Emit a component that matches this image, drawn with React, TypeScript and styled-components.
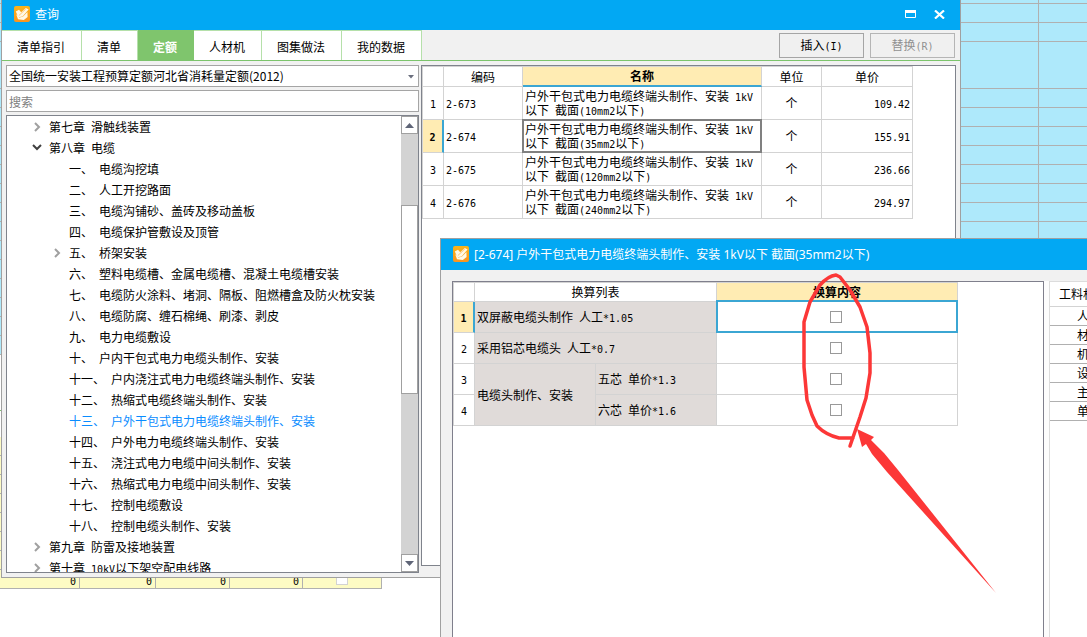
import React from "react";
import styled, { createGlobalStyle, css } from "styled-components";

const GlobalStyle = createGlobalStyle`
  *, *::before, *::after { box-sizing: border-box; }
  body {
    margin: 0;
    background: #fff;
    color: #000;
    font: 12px/14px "Noto Sans CJK SC", sans-serif;
  }
  button, input, select { font: inherit; color: inherit; margin: 0; }
  ul { list-style: none; margin: 0; padding: 0; }
`;

const BLUE = "#02a8f3";
const LINE = "#d3d3d3";
const ACCENT = "#3ba6d3";
const SELECTED = "#ffecb3";
const RED = "#fc3737";

/* ---------- text with half-width Latin runs ---------- */

const Latin = styled.span`
  font-family: "DejaVu Sans Mono", monospace;
  font-size: 10px;
  line-height: 1px;
`;

function Mixed({ children }: { children: string }) {
  const runs = children.split(/([\x20-\x7e]+)/).filter(Boolean);
  return (
    <span>
      {runs.map((run, i) =>
        /^[\x20-\x7e]/.test(run) ? <Latin key={i}>{run}</Latin> : run
      )}
    </span>
  );
}

/* ---------- desktop and the sheet behind the windows ---------- */

const Desktop = styled.main`
  position: relative;
  min-height: 100vh;
  overflow: hidden;
  background: #fff;
`;

const BlueSheet = styled.table`
  width: 100%;
  table-layout: fixed;
  border-collapse: separate;
  border-spacing: 0;
  background: #aee9fb;
  td {
    padding: 0;
    border-bottom: 1px solid #b0b0b0;
  }
  td:first-child { border-right: 1px solid #b0b0b0; }
`;

const SheetRow = styled.tr<{ $height: number }>`
  height: ${(p) => p.$height}px;
`;

const SheetGap = styled.div`
  height: 56px;
  margin-bottom: 26px;
  border-bottom: 1px solid #7cc46c;
`;

const YellowSheet = styled.table`
  width: 382px;
  table-layout: fixed;
  border-collapse: separate;
  border-spacing: 0;
  background: #fdfbc4;
  td {
    height: 19px;
    padding: 2px 3px 0;
    border-right: 1px solid #b0b0b0;
    border-bottom: 1px solid #b0b0b0;
    text-align: right;
    line-height: 14px;
  }
  td:last-child { padding-top: 0; }
`;

/* ---------- window chrome ---------- */

const windowFrame = css`
  position: absolute;
  display: flex;
  flex-direction: column;
  background: #f1f1f1;
`;

const QueryWindow = styled.section`
  ${windowFrame}
  top: 0;
  left: 1px;
  right: 126px;
  height: 578px;
  border: 1px solid #a0a0a0;
  border-top: 0;
`;

const DialogWindow = styled.section`
  ${windowFrame}
  top: 238px;
  left: 440px;
  right: 0;
  bottom: 0;
  border-top: 1px solid #a0a0a0;
  border-left: 1px solid #a0a0a0;
`;

const TitleBar = styled.header<{ $height: number }>`
  flex: none;
  display: flex;
  align-items: center;
  gap: 5px;
  height: ${(p) => p.$height}px;
  padding: 0 15px 2px 12px;
  background: ${BLUE};
  color: #fff;
`;

const Title = styled.h1`
  flex: 1;
  margin: 0;
  padding-top: 2px;
  font: 400 12px/16px "Noto Sans", "Noto Sans CJK SC", sans-serif;
  white-space: nowrap;
`;

const ChromeButton = styled.button`
  display: flex;
  padding: 0;
  margin-left: 13px;
  border: 0;
  background: none;
`;

function AppIcon() {
  return (
    <svg width="16" height="16" viewBox="0 0 16 16" aria-hidden="true">
      <defs>
        <linearGradient id="appOrange" x1="0" y1="0" x2="0" y2="1">
          <stop offset="0" stopColor="#f9b418" />
          <stop offset="1" stopColor="#fb9420" />
        </linearGradient>
      </defs>
      <rect width="16" height="16" rx="2" fill="url(#appOrange)" />
      <path d="M1.800 5.500 5 3.800l2.200 2.400 4.600-4.200 2.800 1.500-6 6.900-4.200.8z" fill="#fff8e6" />
      <path d="m2.200 8.200 2 1.600 1 1.600 3.600-.6 4.600-4.800.2 5-3.800 3-5.800-.8z" fill="#fff8e6" />
      <path d="m4.800 9.600 7-6.600" stroke="#fbb04a" strokeWidth="0.700" />
    </svg>
  );
}

/* ---------- query window ---------- */

const Toolbar = styled.div`
  flex: none;
  display: flex;
  height: 31px;
  padding-right: 5px;
  border-bottom: 1px solid #7cc46c;
`;

const Tabs = styled.nav`
  flex: 1;
  display: flex;
`;

const Tab = styled.button<{ $active?: boolean }>`
  padding: 2px 16px 0 15px;
  border: 0;
  border-top: 1px solid #b5e0aa;
  border-right: 1px solid #b5e0aa;
  background: #fff;
  white-space: nowrap;
  ${(p) =>
    p.$active &&
    css`
      border-color: #7fc56d;
      background: #7fc56d;
      color: #fff;
      font-weight: 700;
    `}
`;

const Actions = styled.div`
  display: flex;
  align-items: center;
  gap: 6px;
`;

const ActionButton = styled.button`
  width: 85px;
  height: 25px;
  padding: 0;
  border: 1px solid #a5a5a5;
  background: #f0f0f0;
  &:disabled {
    border-color: #b5b5b5;
    color: #909090;
  }
`;

const QueryBody = styled.div`
  flex: 1;
  min-height: 0;
  display: flex;
  gap: 2px;
  padding: 4px;
`;

const Sidebar = styled.div`
  flex: 0 0 413px;
  min-height: 0;
  display: flex;
  flex-direction: column;
  gap: 3px;
`;

const ComboBox = styled.label`
  flex: none;
  position: relative;
  display: block;
  select {
    display: block;
    appearance: none;
    width: 100%;
    height: 22px;
    padding: 0 20px 0 2px;
    border: 1px solid #a5a5a5;
    border-radius: 0;
    background: #fff;
  }
  svg {
    position: absolute;
    top: 10px;
    right: 5px;
  }
`;

const SearchBox = styled.input`
  flex: none;
  height: 22px;
  padding: 0 2px;
  border: 1px solid #a5a5a5;
  border-radius: 0;
  background: #fff;
  &::placeholder { color: #808080; opacity: 1; }
`;

const TreePanel = styled.div`
  flex: 1;
  min-height: 0;
  display: flex;
  border: 1px solid #7f838c;
  background: #fff;
`;

const TreeList = styled.ul`
  flex: 1;
  padding-top: 1px;
  overflow: hidden;
`;

const TreeRow = styled.li<{ $level: number; $current?: boolean }>`
  display: flex;
  align-items: center;
  height: 21px;
  padding-bottom: 2px;
  padding-left: ${(p) => (p.$level === 1 ? 22 : 42)}px;
  color: ${(p) => (p.$current ? "#0a8cff" : "#000")};
  white-space: nowrap;
`;

const Toggle = styled.button`
  flex: 0 0 20px;
  display: flex;
  justify-content: center;
  padding: 0 5px 0 0;
  border: 0;
  background: none;
`;

const ScrollBar = styled.div`
  flex: 0 0 17px;
  display: flex;
  flex-direction: column;
  background: #d3d3d3;
`;

const ScrollButton = styled.button`
  flex: 0 0 18px;
  display: flex;
  align-items: center;
  justify-content: center;
  padding: 0;
  border: 1px solid #a0a0a0;
  background: #fff;
`;

const ScrollSpace = styled.div<{ $grow: number }>`
  flex: ${(p) => p.$grow} 1 0;
`;

const ScrollThumb = styled(ScrollSpace)`
  border: 1px solid #a0a0a0;
  background: #fff;
`;

const ResultPanel = styled.div`
  flex: 1;
  min-width: 0;
  margin-bottom: 7px;
  border: 1px solid #7f838c;
  background: #fff;
`;

/* ---------- data grids ---------- */

const Grid = styled.table`
  table-layout: fixed;
  border-collapse: separate;
  border-spacing: 0;
  width: min-content;
`;

const HeadCell = styled.th<{ $selected?: boolean; $underline?: boolean; $height: number }>`
  height: ${(p) => p.$height}px;
  padding: 0;
  border: 1px solid ${LINE};
  border-left-width: 0;
  font-weight: ${(p) => (p.$selected ? 700 : 400)};
  background: ${(p) => (p.$selected ? SELECTED : "#fff")};
  ${(p) => p.$underline && css`border-bottom: 2px solid ${ACCENT};`}
  &:first-child { border-left-width: 1px; }
`;

const RowHead = styled.th<{ $selected?: boolean }>`
  padding: 0;
  border: 1px solid ${LINE};
  border-top: 0;
  font-weight: ${(p) => (p.$selected ? 700 : 400)};
  ${(p) =>
    p.$selected &&
    css`
      background: ${SELECTED};
      border-right: 2px solid ${ACCENT};
    `}
`;

const Cell = styled.td<{ $height: number; $align?: string; $shade?: boolean; $frame?: string; $lift?: number }>`
  height: ${(p) => p.$height}px;
  padding: 0 2px;
  border-right: 1px solid ${LINE};
  border-bottom: 1px solid ${LINE};
  text-align: ${(p) => p.$align ?? "left"};
  background: ${(p) => (p.$shade ? "#e0dbd9" : "#fff")};
  ${(p) =>
    p.$frame &&
    css`
      position: relative;
      &::after {
        content: "";
        position: absolute;
        inset: -${p.$lift ?? 1}px -1px -1px;
        border: 2px solid ${p.$frame};
        pointer-events: none;
      }
    `}
`;

const CheckBox = styled.input.attrs({ type: "checkbox" })<{ $faint?: boolean }>`
  appearance: none;
  display: block;
  width: 12px;
  height: 12px;
  margin: 0 auto;
  border: 1px solid ${(p) => (p.$faint ? LINE : "#999")};
  background: #fff;
`;

/* ---------- conversion dialog ---------- */

const DialogBody = styled.div`
  flex: 1;
  min-height: 0;
  display: flex;
  padding: 11px 0 0 11px;
`;

const ConvertPanel = styled.div`
  flex: 1;
  min-width: 0;
  border: 1px solid #7f7f8c;
  border-bottom: 0;
  background: #fff;
`;

const CheckTd = styled(Cell)`
  padding: 0 4px 0 2px;
`;

const Splitter = styled.div`
  flex: 0 0 5px;
  background: #fdfdfd;
`;

const FactorPanel = styled.div`
  flex: 0 0 38px;
  overflow: hidden;
  border-top: 1px solid #dcdcdc;
  border-left: 1px solid #dcdcdc;
  background: #fff;
`;

const FactorTable = styled.table`
  width: 100%;
  table-layout: fixed;
  border-collapse: separate;
  border-spacing: 0;
  white-space: nowrap;
  th, td {
    height: 19px;
    padding: 0 0 0 27px;
    border-bottom: 1px solid #b0b0b0;
    text-align: left;
    font-weight: 400;
    overflow: hidden;
  }
  th {
    height: 25px;
    padding-left: 9px;
    border-color: ${LINE};
  }
`;

const Markup = styled.svg`
  position: absolute;
  top: 272px;
  left: 800px;
  pointer-events: none;
`;

/* ---------- data ---------- */

type Node = { text: string; level: number; state?: "open" | "closed"; current?: boolean };

const tree: Node[] = [
  { text: "第七章 滑触线装置", level: 1, state: "closed" },
  { text: "第八章 电缆", level: 1, state: "open" },
  { text: "一、 电缆沟挖填", level: 2 },
  { text: "二、 人工开挖路面", level: 2 },
  { text: "三、 电缆沟铺砂、盖砖及移动盖板", level: 2 },
  { text: "四、 电缆保护管敷设及顶管", level: 2 },
  { text: "五、 桥架安装", level: 2, state: "closed" },
  { text: "六、 塑料电缆槽、金属电缆槽、混凝土电缆槽安装", level: 2 },
  { text: "七、 电缆防火涂料、堵洞、隔板、阻燃槽盒及防火枕安装", level: 2 },
  { text: "八、 电缆防腐、缠石棉绳、刷漆、剥皮", level: 2 },
  { text: "九、 电力电缆敷设", level: 2 },
  { text: "十、 户内干包式电力电缆头制作、安装", level: 2 },
  { text: "十一、 户内浇注式电力电缆终端头制作、安装", level: 2 },
  { text: "十二、 热缩式电缆终端头制作、安装", level: 2 },
  { text: "十三、 户外干包式电力电缆终端头制作、安装", level: 2, current: true },
  { text: "十四、 户外电力电缆终端头制作、安装", level: 2 },
  { text: "十五、 浇注式电力电缆中间头制作、安装", level: 2 },
  { text: "十六、 热缩式电力电缆中间头制作、安装", level: 2 },
  { text: "十七、 控制电缆敷设", level: 2 },
  { text: "十八、 控制电缆头制作、安装", level: 2 },
  { text: "第九章 防雷及接地装置", level: 1, state: "closed" },
  { text: "第十章 10kV以下架空配电线路", level: 1, state: "closed" },
];

const results = [
  { code: "2-673", size: "10", price: "109.42" },
  { code: "2-674", size: "35", price: "155.91" },
  { code: "2-675", size: "120", price: "236.66" },
  { code: "2-676", size: "240", price: "294.97" },
];

const tabs = ["清单指引", "清单", "定额", "人材机", "图集做法", "我的数据"];
const factors = ["人", "材", "机", "设", "主", "单"];
const blueRows = [4, 19, 19, 47, ...Array(14).fill(19)];

function Columns({ widths }: { widths: number[] }) {
  return (
    <colgroup>
      {widths.map((w, i) => (
        <col key={i} width={w} />
      ))}
    </colgroup>
  );
}

function Chevron({ open }: { open: boolean }) {
  return open ? (
    <svg width="10" height="7" viewBox="0 0 10 7">
      <path d="m1 1 4 4 4-4" fill="none" stroke="#404040" strokeWidth="2" />
    </svg>
  ) : (
    <svg width="8" height="10" viewBox="0 0 8 10">
      <path d="m2 1 4 4-4 4" fill="none" stroke="#a0a0a0" strokeWidth="2" />
    </svg>
  );
}

function CheckCell({ row, selected }: { row: number; selected?: boolean }) {
  return (
    <CheckTd $height={31} $frame={selected ? ACCENT : undefined} $lift={2}>
      <CheckBox aria-label={`换算内容 ${row}`} />
    </CheckTd>
  );
}

export default function App() {
  return (
    <Desktop>
      <GlobalStyle />
      <BlueSheet>
        <colgroup>
          <col />
          <col width={48} />
        </colgroup>
        <tbody>
          {blueRows.map((h, i) => (
            <SheetRow key={i} $height={h}>
              <td />
              <td />
            </SheetRow>
          ))}
        </tbody>
      </BlueSheet>
      <SheetGap />
      <YellowSheet>
        <Columns widths={[80, 76, 74, 73, 79]} />
        <tbody>
          {Array.from({ length: 8 }, (_, r) => (
            <tr key={r}>
              {[0, 1, 2, 3].map((c) => (
                <td key={c}>{r === 7 && <Mixed>0</Mixed>}</td>
              ))}
              <td>{r === 7 && <CheckBox $faint aria-label="选择" />}</td>
            </tr>
          ))}
        </tbody>
      </YellowSheet>

      <QueryWindow>
        <TitleBar $height={30}>
          <AppIcon />
          <Title>查询</Title>
          <ChromeButton aria-label="最大化">
            <svg width="11" height="8" viewBox="0 0 11 8">
              <path d="M.5 1.5h10v6H.5z" fill="none" stroke="#fff" />
              <path d="M0 0h11v3H0z" fill="#fff" />
            </svg>
          </ChromeButton>
          <ChromeButton aria-label="关闭">
            <svg width="11" height="9" viewBox="0 0 11 9">
              <path d="m1 .5 9 8M10 .5l-9 8" stroke="#fff" strokeWidth="2.2" />
            </svg>
          </ChromeButton>
        </TitleBar>
        <Toolbar>
          <Tabs>
            {tabs.map((t) => (
              <Tab key={t} $active={t === "定额"}>
                {t}
              </Tab>
            ))}
          </Tabs>
          <Actions>
            <ActionButton>
              <Mixed>插入(I)</Mixed>
            </ActionButton>
            <ActionButton disabled>
              <Mixed>替换(R)</Mixed>
            </ActionButton>
          </Actions>
        </Toolbar>
        <QueryBody>
          <Sidebar>
            <ComboBox>
              <select aria-label="定额库">
                <option>全国统一安装工程预算定额河北省消耗量定额(2012)</option>
              </select>
              <svg width="6" height="4" viewBox="0 0 6 4">
                <path d="M0 0h6L3 3.500z" fill="#6b6f7e" />
              </svg>
            </ComboBox>
            <SearchBox type="text" placeholder="搜索" aria-label="搜索" />
            <TreePanel>
              <TreeList>
                {tree.map((n) => (
                  <TreeRow key={n.text} $level={n.level} $current={n.current}>
                    {n.state ? (
                      <Toggle aria-label="展开">
                        <Chevron open={n.state === "open"} />
                      </Toggle>
                    ) : (
                      <Toggle as="span" />
                    )}
                    <Mixed>{n.text}</Mixed>
                  </TreeRow>
                ))}
              </TreeList>
              <ScrollBar>
                <ScrollButton aria-label="向上">
                  <svg width="9" height="5" viewBox="0 0 9 5">
                    <path d="M0 5 4.5 0 9 5z" fill="#5f6577" />
                  </svg>
                </ScrollButton>
                <ScrollSpace $grow={71} />
                <ScrollThumb $grow={188} />
                <ScrollSpace $grow={161} />
                <ScrollButton aria-label="向下">
                  <svg width="9" height="5" viewBox="0 0 9 5">
                    <path d="M0 0h9L4.500 5z" fill="#5f6577" />
                  </svg>
                </ScrollButton>
              </ScrollBar>
            </TreePanel>
          </Sidebar>
          <ResultPanel>
            <Grid>
              <Columns widths={[22, 79, 239, 60, 91]} />
              <thead>
                <tr>
                  <HeadCell $height={21} />
                  <HeadCell $height={21}>编码</HeadCell>
                  <HeadCell $height={21} $selected $underline>
                    名称
                  </HeadCell>
                  <HeadCell $height={21}>单位</HeadCell>
                  <HeadCell $height={21}>单价</HeadCell>
                </tr>
              </thead>
              <tbody>
                {results.map((r, i) => (
                  <tr key={r.code}>
                    <RowHead $selected={i === 1}>
                      <Mixed>{String(i + 1)}</Mixed>
                    </RowHead>
                    <Cell $height={33}>
                      <Mixed>{r.code}</Mixed>
                    </Cell>
                    <Cell $height={33} $frame={i === 1 ? "#808080" : undefined}>
                      <Mixed>{`户外干包式电力电缆终端头制作、安装 1kV以下 截面(${r.size}mm2以下)`}</Mixed>
                    </Cell>
                    <Cell $height={33} $align="center">
                      个
                    </Cell>
                    <Cell $height={33} $align="right">
                      <Mixed>{r.price}</Mixed>
                    </Cell>
                  </tr>
                ))}
              </tbody>
            </Grid>
          </ResultPanel>
        </QueryBody>
      </QueryWindow>

      <DialogWindow>
        <TitleBar $height={31}>
          <AppIcon />
          <Title>[2-674] 户外干包式电力电缆终端头制作、安装 1kV以下 截面(35mm2以下)</Title>
        </TitleBar>
        <DialogBody>
          <ConvertPanel>
            <Grid>
              <Columns widths={[22, 121, 121, 241]} />
              <thead>
                <tr>
                  <HeadCell $height={20} />
                  <HeadCell $height={20} colSpan={2}>
                    换算列表
                  </HeadCell>
                  <HeadCell $height={20} $selected>
                    换算内容
                  </HeadCell>
                </tr>
              </thead>
              <tbody>
                <tr>
                  <RowHead $selected>
                    <Mixed>1</Mixed>
                  </RowHead>
                  <Cell $height={31} $shade colSpan={2}>
                    <Mixed>双屏蔽电缆头制作 人工*1.05</Mixed>
                  </Cell>
                  <CheckCell row={1} selected />
                </tr>
                <tr>
                  <RowHead>
                    <Mixed>2</Mixed>
                  </RowHead>
                  <Cell $height={31} $shade colSpan={2}>
                    <Mixed>采用铝芯电缆头 人工*0.7</Mixed>
                  </Cell>
                  <CheckCell row={2} />
                </tr>
                <tr>
                  <RowHead>
                    <Mixed>3</Mixed>
                  </RowHead>
                  <Cell $height={62} $shade rowSpan={2}>
                    电缆头制作、安装
                  </Cell>
                  <Cell $height={31} $shade>
                    <Mixed>五芯 单价*1.3</Mixed>
                  </Cell>
                  <CheckCell row={3} />
                </tr>
                <tr>
                  <RowHead>
                    <Mixed>4</Mixed>
                  </RowHead>
                  <Cell $height={31} $shade>
                    <Mixed>六芯 单价*1.6</Mixed>
                  </Cell>
                  <CheckCell row={4} />
                </tr>
              </tbody>
            </Grid>
          </ConvertPanel>
          <Splitter />
          <FactorPanel>
            <FactorTable>
              <thead>
                <tr>
                  <th>工料机</th>
                </tr>
              </thead>
              <tbody>
                {factors.map((f) => (
                  <tr key={f}>
                    <td>{f}</td>
                  </tr>
                ))}
              </tbody>
            </FactorTable>
          </FactorPanel>
        </DialogBody>
      </DialogWindow>

      <Markup width="200" height="325" viewBox="800 272 200 325" aria-hidden="true">
        <path
          d="M853 438H839Q826 435 817 426L812 415 807 400 804 367V322L810 302 820 285Q828 276 836 275L840 277 850 290 860 307 867 327 870 353V373L866 398 860 417 850 446"
          fill="none"
          stroke={RED}
          strokeWidth="3.500"
          strokeLinecap="round"
          strokeLinejoin="round"
        />
        <path d="M857 429 874 437 871 440 884 453 898 470 996 593 887 472 872 454 866 444 862 447z" fill={RED} />
      </Markup>
    </Desktop>
  );
}
